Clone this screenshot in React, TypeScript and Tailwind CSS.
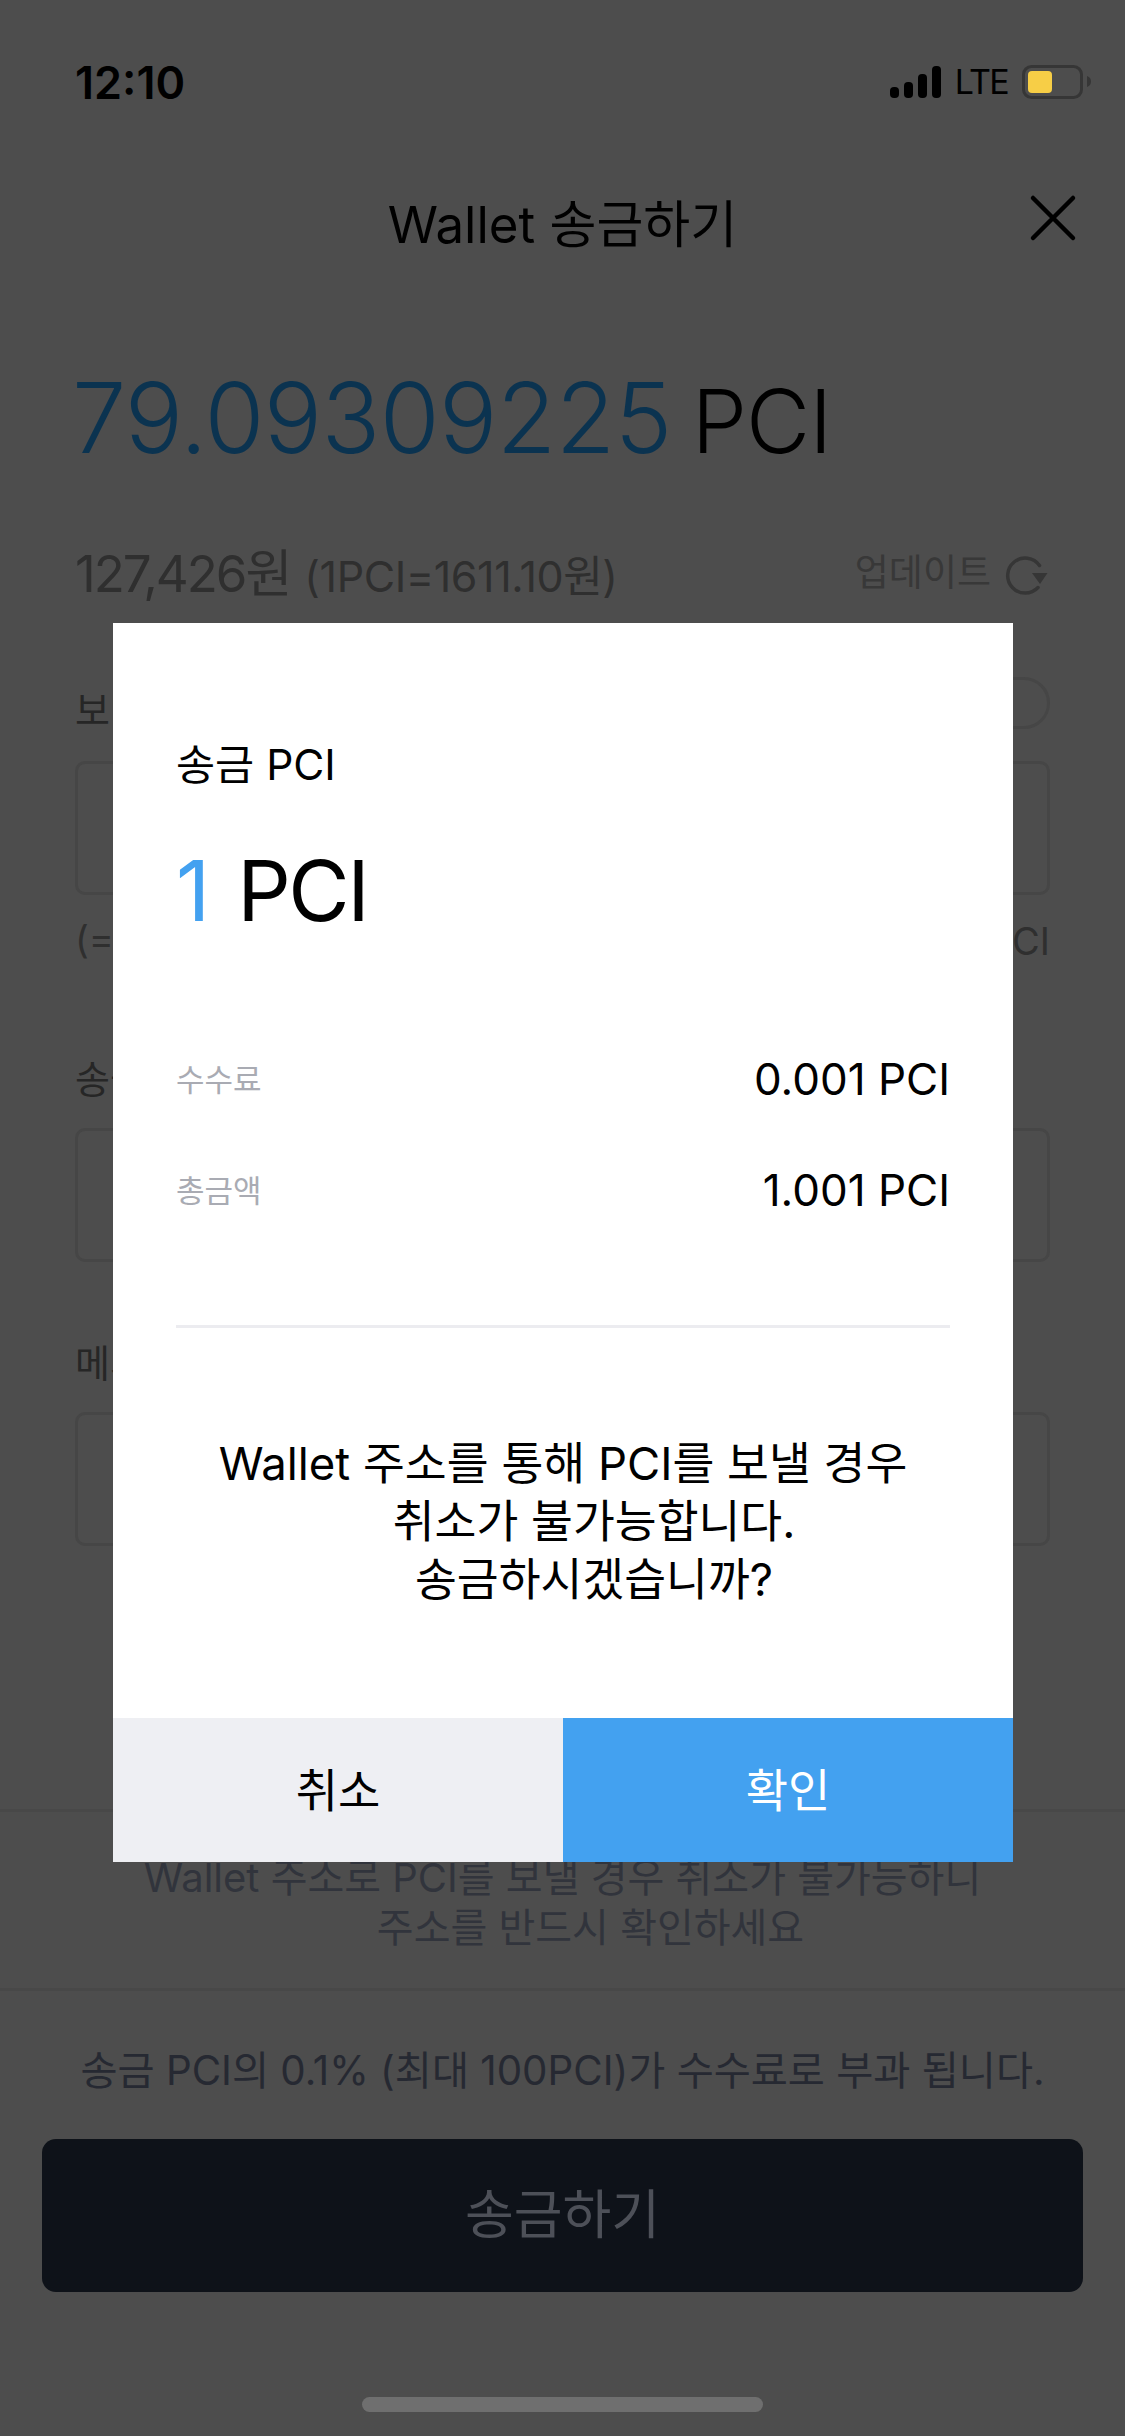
const FONT = "font-['Inter','Noto_Sans_CJK_KR',sans-serif]";

function Field({ label, gap, note }: { label: string; gap: string; note?: boolean }) {
  return (
    <div className="flex flex-col">
      <div className="flex h-[52px] items-center justify-between">
        <span className="text-[38px] leading-none text-[#262626]">{label}</span>
        {note ? <span className="-mt-[14px] h-[52px] w-[120px] rounded-full border-[3px] border-[#464646]" /> : null}
      </div>
      <div className={`h-[134px] rounded-[10px] border-[3px] border-[#464646] ${gap}`} />
    </div>
  );
}

function Row({ label, value, top }: { label: string; value: string; top: string }) {
  return (
    <div className={`flex items-center justify-between ${top}`}>
      <span className="text-[31px] leading-none text-[#a9abb3]">{label}</span>
      <span className="text-[44px] leading-none text-black">{value}</span>
    </div>
  );
}

export default function App() {
  return (
    <div className={`relative flex h-[2436px] w-[1125px] flex-col overflow-hidden bg-[#4d4d4d] ${FONT}`}>
      {/* status bar */}
      <div className="flex h-[165px] items-start justify-between pl-[75px] pr-[33px] pt-[58px]">
        <span className="text-[45px] font-semibold leading-[50px] text-black">12:10</span>
        <div className="flex items-center gap-[14px] pt-[7px]">
          <svg width="51" height="32" viewBox="0 0 51 32" fill="#000">
            <rect x="0" y="21" width="9" height="11" rx="4" />
            <rect x="14" y="16" width="9" height="16" rx="4" />
            <rect x="28" y="8" width="9" height="24" rx="4" />
            <rect x="42" y="0" width="9" height="32" rx="4" />
          </svg>
          <span className="text-[34px] leading-none tracking-[-0.05em] text-black">LTE</span>
          <svg width="70" height="34" viewBox="0 0 70 34">
            <rect x="1.500" y="1.500" width="58" height="31" rx="8" fill="none" stroke="#363636" strokeWidth="3" />
            <rect x="6" y="6" width="24" height="22" rx="4" fill="#f7ce46" />
            <path d="M65 11c3 1 4 3 4 5.500s-1 4.500-4 5.500z" fill="#363636" />
          </svg>
        </div>
      </div>

      {/* header */}
      <div className="relative mt-[6px] flex h-[106px] items-center justify-center">
        <span className="text-[51px] leading-none text-black">Wallet 송금하기</span>
        <svg width="48" height="48" viewBox="0 0 48 48" className="absolute left-[1029px] top-[23px]" stroke="#000" strokeWidth="4.500" strokeLinecap="round">
          <path d="M4 4l40 40M44 4L4 44" />
        </svg>
      </div>

      {/* balance */}
      <div className="mt-[91px] flex items-baseline pl-[72px] pr-[75px]">
        <span className="text-[97px] font-[350] leading-[100px] tracking-[-0.006em] text-[#0b3350]">79.09309225</span>
        <span className="ml-[20px] text-[88px] font-[350] leading-[100px] tracking-[-0.01em] text-black">PCI</span>
      </div>

      <div className="mt-[75px] flex items-center justify-between pl-[75px] pr-[77px]">
        <div className="flex items-baseline text-[#2f2f2f]">
          <span className="text-[51px] leading-[56px] tracking-[-0.04em]">127,426원</span>
          <span className="ml-[14px] text-[43px] leading-[56px] tracking-[-0.01em]">(1PCI=1611.10원)</span>
        </div>
        <div className="flex items-center gap-[13px] text-[#383838]">
          <span className="-mt-[6px] text-[37px] leading-none">업데이트</span>
          <svg width="44" height="40" viewBox="0 0 44 40" fill="none">
            <path d="M34 32.500A17.500 17.500 0 1 1 35.500 10.500" stroke="#363636" strokeWidth="3.500" strokeLinecap="round" />
            <path d="M28 18h15.500l-7.500 11z" fill="#363636" />
          </svg>
        </div>
      </div>

      {/* form, mostly behind the dialog */}
      <div className="mt-[80px] flex flex-col px-[75px]">
        <Field label="보낼 수량" gap="mt-[25px]" note />
        <div className="mt-[23px] flex justify-between text-[38px] leading-[46px] text-[#2f2f2f]">
          <span>(= 0 PCI)</span>
          <span>잔액 79.09 PCI</span>
        </div>
        <div className="mt-[89px]">
          <Field label="송금 주소" gap="mt-[23px]" />
        </div>
        <div className="mt-[75px]">
          <Field label="메시지" gap="mt-[23px]" />
        </div>
      </div>

      {/* notices */}
      <div className="mt-[263px] border-t-[3px] border-[#484848] pt-[41px]">
        <p className="text-center text-[40px] leading-[50px] text-[#31343c]">
          Wallet 주소로 PCI를 보낼 경우 취소가 불가능하니
          <span className="block pl-[56px]">주소를 반드시 확인하세요</span>
        </p>
      </div>
      <div className="flex flex-1 flex-col">
        <div className="mt-[35px] border-t-[3px] border-[#484848] pt-[56px] text-center text-[40.300px] leading-[48px] text-[#262932]">
          송금 PCI의 0.1% (최대 100PCI)가 수수료로 부과 됩니다.
        </div>
        <div className="mx-[42px] mt-[44px] flex h-[153px] items-center justify-center rounded-[14px] bg-[#0e1219] text-[53px] text-[#4d5058]">
          송금하기
        </div>
        <div className="mx-auto mt-[105px] h-[15px] w-[401px] rounded-full bg-[#6f6f6f]" />
      </div>

      {/* dialog */}
      <div className="absolute left-[113px] top-[623px] flex h-[1239px] w-[900px] flex-col bg-white">
        <div className="flex flex-1 flex-col px-[63px]">
          <span className="mt-[118px] text-[42.500px] leading-[48px] text-black">송금 PCI</span>
          <div className="mt-[52px] flex items-baseline text-[84px] font-normal leading-[100px]">
            <span className="text-[#43a1f0]">1</span>
            <span className="ml-[27px] tracking-[-0.03em] text-black">PCI</span>
          </div>
          <Row label="수수료" value="0.001 PCI" top="mt-[116px]" />
          <Row label="총금액" value="1.001 PCI" top="mt-[67px]" />
          <div className="mt-[113px] h-[3px] bg-[#ececf0]" />
          <p className="mt-[107px] text-center text-[45.500px] leading-[58px] text-black">
            Wallet 주소를 통해 PCI를 보낼 경우
            <span className="block pl-[62px]">취소가 불가능합니다.</span>
            <span className="block pl-[62px]">송금하시겠습니까?</span>
          </p>
        </div>
        <div className="grid h-[144px] grid-cols-2 text-[46px]">
          <div className="flex items-center justify-center bg-[#eeeff3] text-black">취소</div>
          <div className="flex items-center justify-center bg-[#43a1f0] text-white">확인</div>
        </div>
      </div>
    </div>
  );
}
